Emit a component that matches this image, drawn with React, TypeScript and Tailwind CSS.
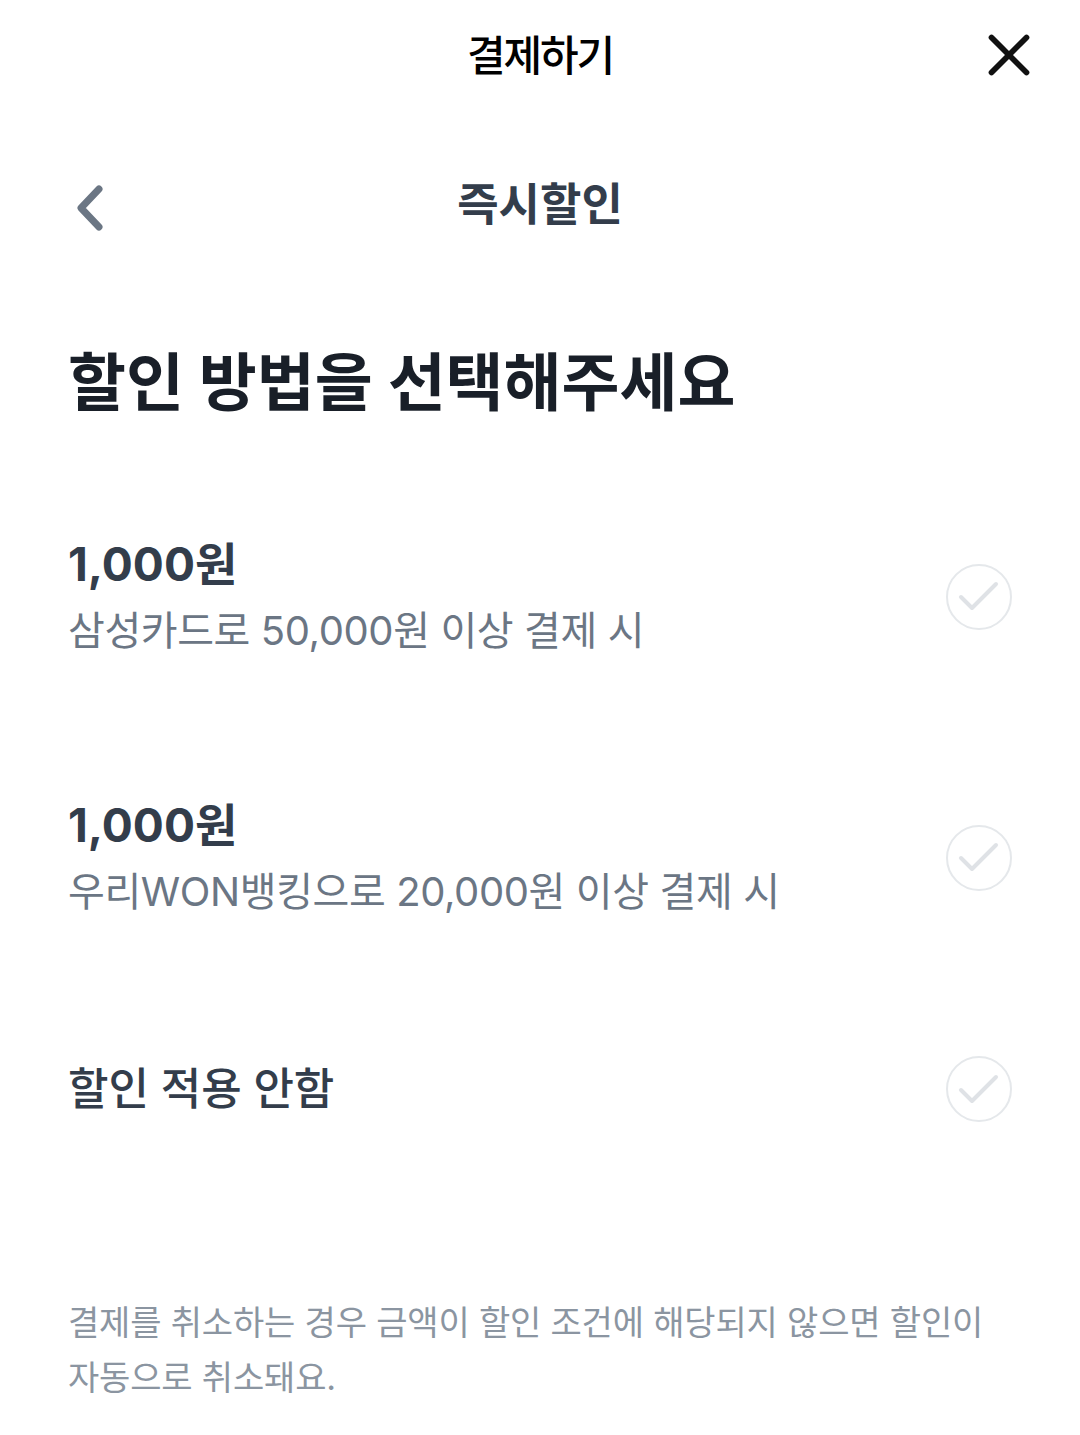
import { X } from 'lucide-react';

const font = { fontFamily: 'Inter, "Noto Sans CJK KR", sans-serif' };

function CheckCircle() {
  return (
    <div className="h-[66px] w-[66px] shrink-0 rounded-full border-[2.5px] border-[#e5e8eb]">
      <svg viewBox="0 0 66 66" className="-m-[2.5px] h-[66px] w-[66px]" fill="none">
        <path d="M15 34 L26 45 L50 21" stroke="#dfe2e6" strokeWidth={4} strokeLinecap="round" strokeLinejoin="round" />
      </svg>
    </div>
  );
}

function Option({ title, desc }: { title: string; desc?: string }) {
  return (
    <div className="flex items-center justify-between">
      <div className="flex flex-col">
        <p className={desc ? 'text-[46px] font-bold leading-[60px] text-[#333d4b]' : 'text-[44px] font-medium leading-[60px] text-[#333d4b]'}>
          {title}
        </p>
        {desc && <p className="mt-[9px] text-[40px] leading-[56px] tracking-[-0.01em] text-[#6b7684]">{desc}</p>}
      </div>
      <CheckCircle />
    </div>
  );
}

export default function App() {
  return (
    <div className="h-[1435px] w-[1080px] bg-white" style={font}>
      <div className="relative flex h-[110px] items-center justify-center">
        <h1 className="text-[42px] font-medium tracking-[-0.05em] text-black">결제하기</h1>
        <X className="absolute right-[36px] top-[20px] h-[70px] w-[70px] text-[#111]" strokeWidth={1.95} />
      </div>
      <div className="relative flex h-[190px] items-center justify-center">
        <svg viewBox="0 0 32 48" className="absolute left-[73px] top-[74px] h-[48px] w-[32px]" fill="none">
          <path d="M26 5 L8 24 L26 43" stroke="#6b7684" strokeWidth={7} strokeLinecap="round" strokeLinejoin="round" />
        </svg>
        <h2 className="text-[45px] font-bold text-[#333d4b]">즉시할인</h2>
      </div>
      <div className="px-[68px]">
        <h3 className="mt-[38px] text-[63px] font-bold leading-[88px] text-[#191f28]">할인 방법을 선택해주세요</h3>
        <div className="mt-[108px] flex flex-col gap-[136px]">
          <Option title="1,000원" desc="삼성카드로 50,000원 이상 결제 시" />
          <Option title="1,000원" desc="우리WON뱅킹으로 20,000원 이상 결제 시" />
          <Option title="할인 적용 안함" />
        </div>
        <p className="mt-[173px] text-[34px] leading-[55px] tracking-[-0.005em] text-[#8b95a1]">
          결제를 취소하는 경우 금액이 할인 조건에 해당되지 않으면 할인이
          <br />
          자동으로 취소돼요.
        </p>
      </div>
    </div>
  );
}
